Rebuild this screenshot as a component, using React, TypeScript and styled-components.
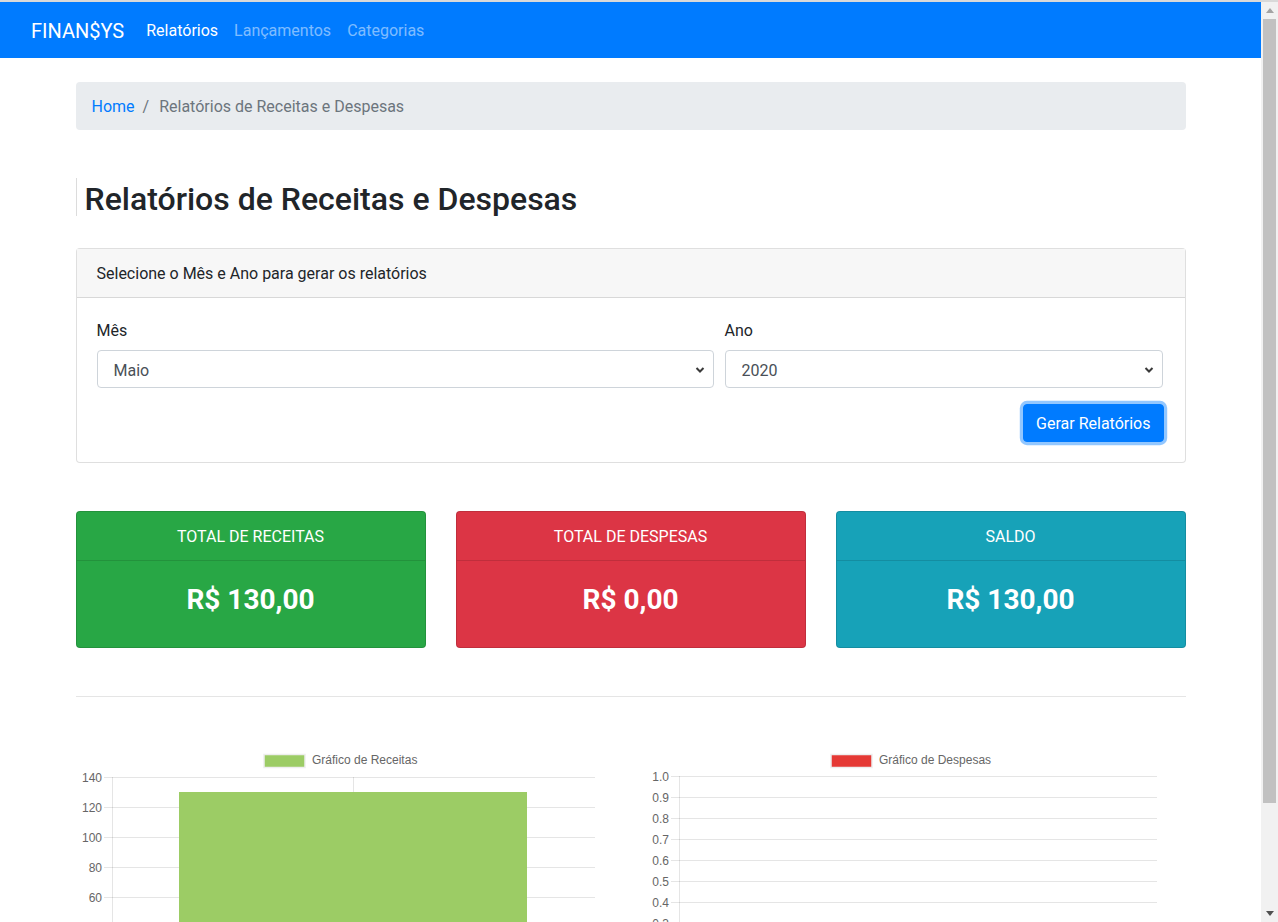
import React from "react"
import styled, { createGlobalStyle } from "styled-components"

const GlobalStyle = createGlobalStyle`
  html, body {
    margin: 0;
    padding: 0;
    background: #fff;
  }
  body {
    font-family: "Segoe UI", Roboto, "Helvetica Neue", Arial, "Noto Sans", sans-serif;
    font-size: 16px;
    line-height: 1.5;
    color: #212529;
    border-top: 2px solid #d9d9d9;
  }
  #root {
    width: calc(100% - 17px);
  }
  * {
    box-sizing: border-box;
  }
`

const Navbar = styled.nav`
  background: #007bff;
  height: 56px;
  padding: 8px 31px;
  display: flex;
  align-items: center;
`

const Brand = styled.a`
  color: #fff;
  font-size: 20px;
  line-height: 30px;
  padding: 6px 0 4px;
  margin-right: 14px;
  text-decoration: none;
`

const NavLinks = styled.div`
  display: flex;
  padding-top: 2px;
`

const NavLink = styled.a<{ $active?: boolean }>`
  color: ${(p) => (p.$active ? "#fff" : "rgba(255, 255, 255, 0.5)")};
  padding: 8px;
  text-decoration: none;
`

const Container = styled.main`
  width: 1140px;
  margin: 0 auto;
  padding: 24px 15px 48px;
`

const Breadcrumb = styled.ol`
  display: flex;
  list-style: none;
  margin: 0;
  padding: 13px 16px 11px;
  background: #e9ecef;
  border-radius: 4px;
`

const Crumb = styled.li<{ $active?: boolean }>`
  color: ${(p) => (p.$active ? "#6c757d" : "#007bff")};
  &:not(:first-child)::before {
    content: "/";
    color: #6c757d;
    padding: 0 10px 0 8px;
  }
`

const PageTitle = styled.h2`
  margin: 48px 0 32px;
  padding: 2px 0 0 8px;
  height: 38px;
  border-left: 1px solid #dcdcdc;
  font-size: 32px;
  font-weight: 500;
  line-height: 1.2;
`

const Card = styled.section`
  border: 1px solid rgba(0, 0, 0, 0.125);
  border-radius: 4px;
  background: #fff;
`

const CardHeader = styled.div`
  padding: 13px 20px 11px;
  background: #f7f7f7;
  border-bottom: 1px solid rgba(0, 0, 0, 0.125);
`

const CardBody = styled.div`
  padding: 20px;
`

const FormRow = styled.div`
  display: grid;
  grid-template-columns: 617px 438px;
  column-gap: 11px;
  margin-bottom: 16px;
`

const Label = styled.label`
  display: block;
  margin-bottom: 8px;
  padding-top: 1px;
  height: 24px;
`

const SelectWrap = styled.div`
  position: relative;
`

const Select = styled.select`
  width: 100%;
  height: 38px;
  appearance: none;
  padding: 8px 32px 4px 16px;
  font: inherit;
  color: #495057;
  background: #fff;
  border: 1px solid #ced4da;
  border-radius: 4px;
`

const Chevron = styled.svg`
  position: absolute;
  right: 9px;
  top: 16px;
  pointer-events: none;
`

const Actions = styled.div`
  display: flex;
  justify-content: flex-end;
`

const Button = styled.button`
  font: inherit;
  color: #fff;
  background: #007bff;
  border: 1px solid #007bff;
  border-radius: 4px;
  padding: 7px 12px 5px;
  box-shadow: 0 0 0 3.2px rgba(38, 143, 255, 0.5);
  margin-right: 1px;
`

const Stats = styled.div`
  display: grid;
  grid-template-columns: repeat(3, 1fr);
  gap: 30px;
  margin-top: 48px;
`

const StatCard = styled.div<{ $bg: string }>`
  background: ${(p) => p.$bg};
  color: #fff;
  border: 1px solid rgba(0, 0, 0, 0.125);
  border-radius: 4px;
  text-align: center;
`

const StatHeader = styled.div`
  padding: 13px 20px 11px;
  border-bottom: 1px solid rgba(0, 0, 0, 0.125);
`

const StatValue = styled.h3`
  margin: 0;
  padding: 22px 20px 31px;
  font-size: 28px;
  font-weight: 700;
  line-height: 33px;
`

const Divider = styled.hr`
  margin: 48px 0 47px;
  border: 0;
  border-top: 1px solid rgba(0, 0, 0, 0.1);
`

const Charts = styled.div`
  display: grid;
  grid-template-columns: repeat(2, 1fr);
  gap: 30px;
`

const ChartSvg = styled.svg`
  display: block;
  font-family: "Liberation Sans", Arial, sans-serif;
  font-size: 12px;
`

const Scrollbar = styled.aside`
  position: fixed;
  top: 2px;
  right: 0;
  bottom: 0;
  width: 17px;
  background: #f1f1f1;
  display: flex;
  flex-direction: column;
`

const ScrollArrow = styled.div`
  height: 17px;
  display: flex;
  align-items: center;
  justify-content: center;
  flex: none;
`

const ScrollTrack = styled.div`
  flex: 1;
  padding: 0 2px;
`

const ScrollThumb = styled.div`
  height: 784px;
  background: #c1c1c1;
`

type ChartProps = {
  legend: string
  color: string
  ticks: string[]
  top: number
  step: number
  axisX: number
  right: number
  legendX: number
  bar?: { x: number; width: number; y: number }
  midLine?: number
}

const grid = "rgba(0,0,0,0.1)"

const Chart: React.FC<ChartProps> = ({ legend, color, ticks, top, step, axisX, right, legendX, bar, midLine }) => {
  const bottom = top + step * (ticks.length - 1)
  return (
    <ChartSvg width={540} height={270} viewBox="0 0 540 270">
      <rect x={legendX} y={10.5} width={41} height={13} fill={color} stroke="#eee" strokeWidth={1.5} />
      <text x={legendX + 48} y={20} fill="#666">{legend}</text>
      {ticks.map((t, i) => {
        const y = top + i * step + 0.5
        return (
          <g key={t}>
            <line x1={axisX - 8} x2={right} y1={y} y2={y} stroke={grid} />
            <text x={axisX - 10} y={y + 4} fill="#666" textAnchor="end">{t}</text>
          </g>
        )
      })}
      <line x1={axisX + 0.5} x2={axisX + 0.5} y1={top} y2={bottom + 8} stroke={grid} />
      {midLine !== undefined && (
        <line x1={midLine + 0.5} x2={midLine + 0.5} y1={top} y2={bottom + 8} stroke={grid} />
      )}
      {bar && (
        <rect x={bar.x} y={top + bar.y} width={bar.width} height={bottom - top - bar.y} fill={color} />
      )}
    </ChartSvg>
  )
}

const months = ["Janeiro", "Fevereiro", "Março", "Abril", "Maio", "Junho", "Julho", "Agosto", "Setembro", "Outubro", "Novembro", "Dezembro"]

const ChevronIcon = () => (
  <Chevron width="10" height="8" viewBox="0 0 10 8">
    <path d="M1.5 2 L5 5.5 L8.5 2" fill="none" stroke="#3a3a3a" strokeWidth="2" />
  </Chevron>
)

const App: React.FC = () => (
  <>
    <GlobalStyle />
    <Navbar>
      <Brand href="#">FINAN$YS</Brand>
      <NavLinks>
        <NavLink $active href="#">Relatórios</NavLink>
        <NavLink href="#">Lançamentos</NavLink>
        <NavLink href="#">Categorias</NavLink>
      </NavLinks>
    </Navbar>
    <Container>
      <Breadcrumb>
        <Crumb>Home</Crumb>
        <Crumb $active>Relatórios de Receitas e Despesas</Crumb>
      </Breadcrumb>

      <PageTitle>Relatórios de Receitas e Despesas</PageTitle>

      <Card>
        <CardHeader>Selecione o Mês e Ano para gerar os relatórios</CardHeader>
        <CardBody>
          <FormRow>
            <div>
              <Label>Mês</Label>
              <SelectWrap>
                <Select defaultValue="Maio">
                  {months.map((m) => (
                    <option key={m}>{m}</option>
                  ))}
                </Select>
                <ChevronIcon />
              </SelectWrap>
            </div>
            <div>
              <Label>Ano</Label>
              <SelectWrap>
                <Select defaultValue="2020">
                  <option>2019</option>
                  <option>2020</option>
                  <option>2021</option>
                </Select>
                <ChevronIcon />
              </SelectWrap>
            </div>
          </FormRow>
          <Actions>
            <Button>Gerar Relatórios</Button>
          </Actions>
        </CardBody>
      </Card>

      <Stats>
        <StatCard $bg="#28a745">
          <StatHeader>TOTAL DE RECEITAS</StatHeader>
          <StatValue>R$ 130,00</StatValue>
        </StatCard>
        <StatCard $bg="#dc3545">
          <StatHeader>TOTAL DE DESPESAS</StatHeader>
          <StatValue>R$ 0,00</StatValue>
        </StatCard>
        <StatCard $bg="#17a2b8">
          <StatHeader>SALDO</StatHeader>
          <StatValue>R$ 130,00</StatValue>
        </StatCard>
      </Stats>

      <Divider />

      <Charts>
        <Chart
          legend="Gráfico de Receitas"
          color="#9ccc65"
          ticks={["140", "120", "100", "80", "60", "40", "20", "0"]}
          top={33}
          step={30}
          axisX={36}
          right={519}
          legendX={188}
          midLine={277}
          bar={{ x: 103, width: 348, y: 15 }}
        />
        <Chart
          legend="Gráfico de Despesas"
          color="#e53935"
          ticks={["1.0", "0.9", "0.8", "0.7", "0.6", "0.5", "0.4", "0.3", "0.2", "0.1", "0.0"]}
          top={32}
          step={21}
          axisX={33}
          right={511}
          legendX={185}
        />
      </Charts>
    </Container>

    <Scrollbar>
      <ScrollArrow>
        <svg width="8" height="5" viewBox="0 0 8 5">
          <path d="M0 5 L4 0 L8 5 Z" fill="#a3a3a3" />
        </svg>
      </ScrollArrow>
      <ScrollTrack>
        <ScrollThumb />
      </ScrollTrack>
      <ScrollArrow>
        <svg width="8" height="5" viewBox="0 0 8 5">
          <path d="M0 0 L8 0 L4 5 Z" fill="#505050" />
        </svg>
      </ScrollArrow>
    </Scrollbar>
  </>
)

export default App
